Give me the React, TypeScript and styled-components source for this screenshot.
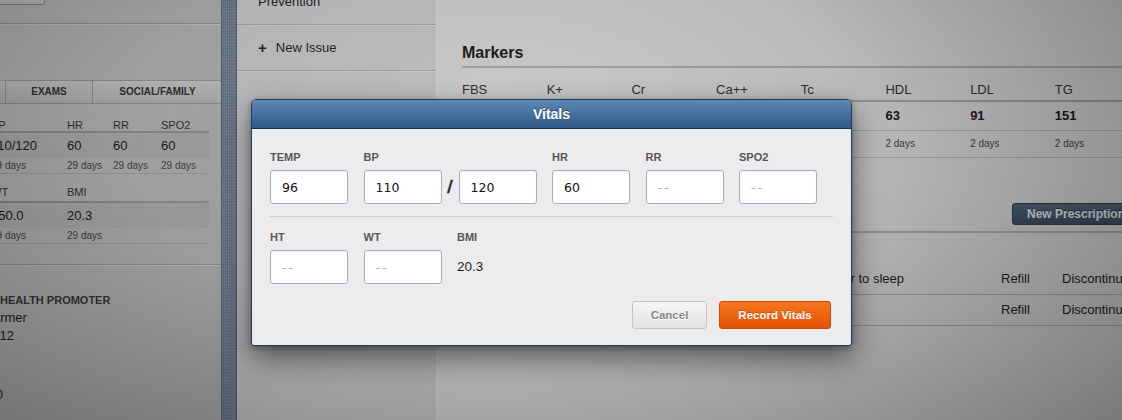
import React from 'react';
import styled, { createGlobalStyle } from 'styled-components';

const GlobalStyle = createGlobalStyle`
  body {
    margin: 0;
    font-family: "Liberation Sans", Arial, sans-serif;
    background: #999;
  }
`;

const Screen = styled.div`
  position: relative;
  width: 1122px;
  height: 420px;
  display: flex;
  overflow: hidden;
`;

/* ---------- left patient panel ---------- */

const LeftPanel = styled.aside`
  width: 221px;
  flex: none;
  overflow: hidden;
  display: flex;
  flex-direction: column;
  background: linear-gradient(100deg, #bababa, #b0b0b0);
  color: #222;
`;

const TopBar = styled.div`
  height: 23px;
  border-bottom: 1px solid #939393;
  box-shadow: 0 1px 0 #c6c6c6;
`;

const GhostButton = styled.div`
  width: 60px;
  height: 20px;
  margin: -17px 0 0 -17px;
  border: 1px solid #858585;
  border-radius: 3px;
  background: linear-gradient(#cfcfcf, #c2c2c2);
`;

const Tabs = styled.div`
  display: flex;
  margin: 56px 0 0 -80px;
  height: 22px;
  border-top: 1px solid #999;
  border-bottom: 1px solid #929292;
  background: linear-gradient(#c6c6c6, #b4b4b4);
`;

const Tab = styled.div<{ $w: number }>`
  width: ${p => p.$w}px;
  flex: none;
  border-right: 1px solid #959595;
  font-size: 10px;
  font-weight: bold;
  line-height: 22px;
  text-align: center;
  color: #333;
`;

const VitalsGrid = styled.div`
  display: grid;
  grid-template-columns: 76px 46px 48px 48px;
  width: 218px;
  margin-left: -9px;
`;

const GridLabel = styled.div<{ $top: number }>`
  padding-top: ${p => p.$top}px;
  height: ${p => 27 - p.$top}px;
  line-height: 16px;
  font-size: 11px;
  color: #333;
  border-bottom: 2px solid #939393;
`;

const GridValue = styled.div`
  height: 25px;
  line-height: 25px;
  font-size: 13px;
  color: #1c1c1c;
  background: rgba(0, 0, 0, 0.035);
`;

const GridAge = styled.div`
  height: 15px;
  line-height: 15px;
  font-size: 10px;
  color: #444;
  border-bottom: 1px solid #a2a2a2;
`;

const SectionRule = styled.div`
  margin-top: 20px;
  border-top: 1px solid #939393;
  box-shadow: 0 1px 0 #c6c6c6;
`;

const InfoList = styled.div`
  margin: 26px 0 0 -15px;
  display: flex;
  flex-direction: column;
  font-size: 13px;
  line-height: 18px;
  color: #1e1e1e;
`;

const InfoHeading = styled.div`
  padding-left: 15px;
  font-size: 11px;
  font-weight: bold;
  color: #383838;
`;

const InfoLine = styled.div<{ $gap?: number }>`
  margin-top: ${p => p.$gap ?? 0}px;
  white-space: nowrap;
`;

/* ---------- splitter ---------- */

const Splitter = styled.div`
  width: 14px;
  flex: none;
  border-left: 1px solid #56657a;
  border-right: 1px solid #5b6977;
  background:
    repeating-linear-gradient(90deg, rgba(255,255,255,0.05) 0 1px, rgba(0,0,0,0.05) 1px 2px),
    repeating-linear-gradient(0deg, rgba(255,255,255,0.04) 0 1px, rgba(0,0,0,0.05) 1px 3px),
    #738396;
`;

/* ---------- issues list ---------- */

const IssuesPanel = styled.nav`
  width: 199px;
  flex: none;
  border-right: 1px solid #dadada;
  background: linear-gradient(100deg, #cbcbcb, #c8c8c8);
  display: flex;
  flex-direction: column;
`;

const IssueItem = styled.div<{ $first?: boolean }>`
  height: 45px;
  margin-top: ${p => (p.$first ? -21 : 0)}px;
  padding-left: 21px;
  display: flex;
  align-items: center;
  gap: 9px;
  font-size: 13px;
  color: #262626;
  border-bottom: 1px solid #a6a6a6;
  box-shadow: 0 1px 0 #d6d6d6;
`;

const Plus = styled.span`
  font-size: 15px;
  font-weight: bold;
  line-height: 1;
  margin-top: -1px;
`;

/* ---------- right main panel ---------- */

const MainPanel = styled.main`
  flex: 1;
  min-width: 0;
  overflow: hidden;
  background: #d4d4d4;
`;

const MainInner = styled.div`
  width: 678px;
  margin-left: 25px;
  display: flex;
  flex-direction: column;
`;

const Title = styled.h2`
  margin: 43px 0 0;
  font-size: 16px;
  line-height: 20px;
  font-weight: bold;
  color: #1e1e1e;
`;

const ThickRule = styled.div<{ $gap: number }>`
  margin-top: ${p => p.$gap}px;
  height: 2px;
  background: #aaaaaa;
  width: 740px;
`;

const MarkerGrid = styled.div`
  display: grid;
  grid-template-columns: repeat(8, 84.7px);
`;

const MarkerHead = styled.div`
  padding: 13px 0 1px;
  line-height: 18px;
  font-size: 13px;
  color: #333;
  border-bottom: 2px solid #a3a3a3;
`;

const MarkerValue = styled.div`
  height: 28px;
  line-height: 28px;
  font-size: 13px;
  font-weight: bold;
  color: #1c1c1c;
  border-bottom: 1px solid #b3b3b3;
`;

const MarkerAge = styled.div`
  height: 26px;
  line-height: 26px;
  font-size: 10px;
  color: #444;
  border-bottom: 1px solid #b3b3b3;
`;

const ActionRow = styled.div`
  display: flex;
  justify-content: flex-end;
  margin-top: 45px;
`;

const DarkButton = styled.button`
  height: 22px;
  padding: 0 14px;
  border: 1px solid #2c3a49;
  border-radius: 3px;
  background: linear-gradient(#52667b, #3b4d60);
  color: #e4e9ee;
  font-family: "Liberation Sans", Arial, sans-serif;
  font-size: 12px;
  font-weight: bold;
  white-space: nowrap;
  text-shadow: 0 -1px 0 rgba(0, 0, 0, 0.4);
`;

const MedTable = styled.div`
  margin-top: 31px;
  display: flex;
  flex-direction: column;
`;

const MedRow = styled.div`
  display: grid;
  grid-template-columns: 539px 61px 1fr;
  height: 30px;
  line-height: 30px;
  font-size: 13px;
  color: #222;
  border-bottom: 1px solid #a9a9a9;
  white-space: nowrap;
`;

const MedNote = styled.div`
  text-align: right;
  padding-right: 97px;
  overflow: hidden;
`;

/* ---------- dim layer + modal ---------- */

const Dim = styled.div`
  position: absolute;
  inset: 0;
  pointer-events: none;
  background: radial-gradient(
    ellipse 72% 105% at 44% 32%,
    rgba(0, 0, 0, 0.04) 0%,
    rgba(0, 0, 0, 0.12) 45%,
    rgba(0, 0, 0, 0.42) 100%
  );
`;

const Modal = styled.section`
  position: absolute;
  left: 251px;
  top: 99px;
  width: 601px;
  height: 247px;
  box-sizing: border-box;
  border: 1px solid #1f3d5e;
  border-radius: 5px 5px 3px 3px;
  background: #ececec;
  box-shadow: 0 12px 30px rgba(0, 0, 0, 0.5), 0 2px 6px rgba(0, 0, 0, 0.3);
  overflow: hidden;
  display: flex;
  flex-direction: column;
`;

const ModalHeader = styled.header`
  height: 28px;
  flex: none;
  border-bottom: 1px solid #16304d;
  background: linear-gradient(#5c88b3, #2f5984);
  color: #fff;
  font-size: 14px;
  font-weight: bold;
  line-height: 28px;
  text-align: center;
  text-shadow: 0 -1px 0 rgba(0, 0, 0, 0.35);
`;

const ModalBody = styled.div`
  padding: 22px 18px 0;
  display: flex;
  flex-direction: column;
`;

const FieldRow = styled.div`
  display: flex;
  gap: 15.5px;
`;

const Field = styled.div`
  display: flex;
  flex-direction: column;
  gap: 6px;
`;

const Label = styled.label`
  font-size: 11px;
  line-height: 13px;
  font-weight: bold;
  color: #585858;
`;

const Pair = styled.div`
  display: flex;
  align-items: center;
`;

const Slash = styled.span`
  width: 17px;
  text-align: center;
  font-size: 19px;
  color: #222;
  -webkit-text-stroke: 0.6px #222;
`;

const Input = styled.input`
  width: 78px;
  height: 34px;
  box-sizing: border-box;
  margin: 0;
  padding: 0 11px;
  border: 1px solid #9fb1c4;
  border-radius: 3px;
  background: #fff;
  box-shadow: inset 0 1px 2px rgba(0, 0, 0, 0.06);
  font-family: "DejaVu Sans", sans-serif;
  font-size: 12.5px;
  color: #111;
  outline: none;
  &::placeholder {
    color: #b0b0b0;
    letter-spacing: 2px;
  }
`;

const Static = styled.div`
  height: 34px;
  line-height: 34px;
  font-size: 13.5px;
  color: #1e1e1e;
`;

const Divider = styled.hr`
  margin: 12px 0 14px;
  border: 0;
  height: 1px;
  background: #c4d0dc;
`;

const Footer = styled.div`
  margin: 17px 2px 0 0;
  display: flex;
  justify-content: flex-end;
  gap: 12px;
`;

const Btn = styled.button<{ $primary?: boolean }>`
  height: 28px;
  width: ${p => (p.$primary ? 112 : 75)}px;
  border-radius: 3px;
  font-family: "Liberation Sans", Arial, sans-serif;
  font-size: 11.5px;
  font-weight: bold;
  border: 1px solid ${p => (p.$primary ? '#d04a03' : '#c6c6c6')};
  background: ${p =>
    p.$primary
      ? 'linear-gradient(#f8761f, #e45204)'
      : 'linear-gradient(#f5f5f5, #e3e3e3)'};
  color: ${p => (p.$primary ? '#fff' : '#8a8a8a')};
  text-shadow: ${p =>
    p.$primary ? '0 -1px 0 rgba(0,0,0,0.2)' : '0 1px 0 #fff'};
`;

const markers = [
  { name: 'FBS', value: '', age: '' },
  { name: 'K+', value: '', age: '' },
  { name: 'Cr', value: '', age: '' },
  { name: 'Ca++', value: '', age: '' },
  { name: 'Tc', value: '', age: '' },
  { name: 'HDL', value: '63', age: '2 days' },
  { name: 'LDL', value: '91', age: '2 days' },
  { name: 'TG', value: '151', age: '2 days' },
];

const App: React.FC = () => {
  return (
    <>
      <GlobalStyle />
      <Screen>
        <LeftPanel>
          <TopBar>
            <GhostButton />
          </TopBar>
          <Tabs>
            <Tab $w={85}>VITALS</Tab>
            <Tab $w={86}>EXAMS</Tab>
            <Tab $w={129}>SOCIAL/FAMILY</Tab>
          </Tabs>
          <VitalsGrid>
            {['BP', 'HR', 'RR', 'SPO2'].map(l => (
              <GridLabel key={l} $top={13}>{l}</GridLabel>
            ))}
            {['110/120', '60', '60', '60'].map((v, i) => (
              <GridValue key={i}>{v}</GridValue>
            ))}
            {[0, 1, 2, 3].map(i => (
              <GridAge key={i}>29 days</GridAge>
            ))}
            {['WT', 'BMI', '', ''].map((l, i) => (
              <GridLabel key={i} $top={10}>{l}</GridLabel>
            ))}
            {['150.0', '20.3', '', ''].map((v, i) => (
              <GridValue key={i}>{v}</GridValue>
            ))}
            {['29 days', '29 days', '', ''].map((v, i) => (
              <GridAge key={i}>{v}</GridAge>
            ))}
          </VitalsGrid>
          <SectionRule />
          <InfoList>
            <InfoHeading>HEALTH PROMOTER</InfoHeading>
            <InfoLine>Farmer</InfoLine>
            <InfoLine>2012</InfoLine>
            <InfoLine $gap={41}>1.0</InfoLine>
          </InfoList>
        </LeftPanel>

        <Splitter />

        <IssuesPanel>
          <IssueItem $first>Prevention</IssueItem>
          <IssueItem>
            <Plus>+</Plus>New Issue
          </IssueItem>
        </IssuesPanel>

        <MainPanel>
          <MainInner>
            <Title>Markers</Title>
            <ThickRule $gap={3} />
            <MarkerGrid>
              {markers.map(m => (
                <MarkerHead key={m.name}>{m.name}</MarkerHead>
              ))}
              {markers.map(m => (
                <MarkerValue key={m.name}>{m.value}</MarkerValue>
              ))}
              {markers.map(m => (
                <MarkerAge key={m.name}>{m.age}</MarkerAge>
              ))}
            </MarkerGrid>
            <ActionRow>
              <DarkButton>New Prescription</DarkButton>
            </ActionRow>
            <ThickRule $gap={6} />
            <MedTable>
              <MedRow>
                <MedNote>Take 1 tablet 30 minutes prior to sleep</MedNote>
                <span>Refill</span>
                <span>Discontinue</span>
              </MedRow>
              <MedRow>
                <MedNote />
                <span>Refill</span>
                <span>Discontinue</span>
              </MedRow>
            </MedTable>
          </MainInner>
        </MainPanel>

        <Dim />

        <Modal>
          <ModalHeader>Vitals</ModalHeader>
          <ModalBody>
            <FieldRow>
              <Field>
                <Label>TEMP</Label>
                <Input defaultValue="96" />
              </Field>
              <Field>
                <Label>BP</Label>
                <Pair>
                  <Input defaultValue="110" />
                  <Slash>/</Slash>
                  <Input defaultValue="120" />
                </Pair>
              </Field>
              <Field>
                <Label>HR</Label>
                <Input defaultValue="60" />
              </Field>
              <Field>
                <Label>RR</Label>
                <Input placeholder="--" />
              </Field>
              <Field>
                <Label>SPO2</Label>
                <Input placeholder="--" />
              </Field>
            </FieldRow>
            <Divider />
            <FieldRow>
              <Field>
                <Label>HT</Label>
                <Input placeholder="--" />
              </Field>
              <Field>
                <Label>WT</Label>
                <Input placeholder="--" />
              </Field>
              <Field>
                <Label>BMI</Label>
                <Static>20.3</Static>
              </Field>
            </FieldRow>
            <Footer>
              <Btn>Cancel</Btn>
              <Btn $primary>Record Vitals</Btn>
            </Footer>
          </ModalBody>
        </Modal>
      </Screen>
    </>
  );
};

export default App;
